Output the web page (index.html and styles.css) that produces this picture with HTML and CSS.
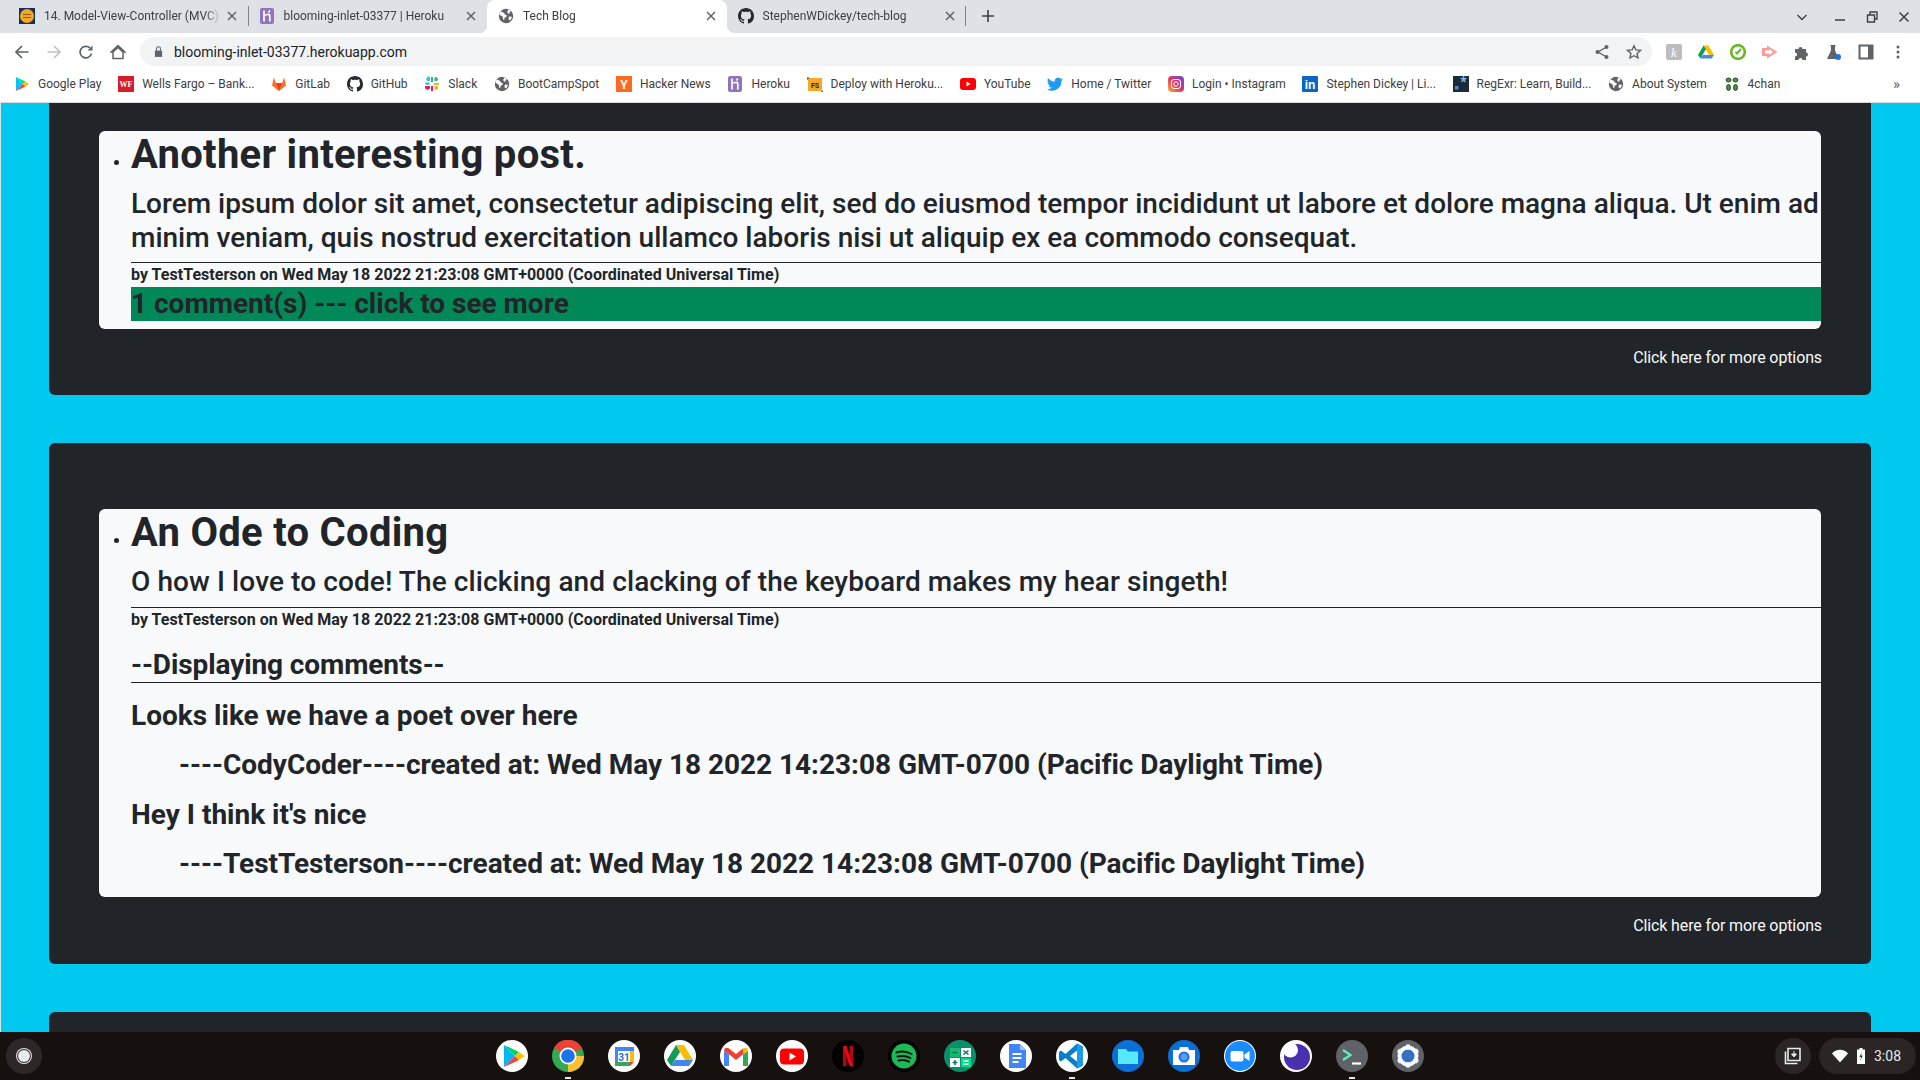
FILE: index.html
```html
<!DOCTYPE html>
<html lang="en">
<head>
    <meta charset="UTF-8">
    <title>Tech Blog</title>
    <link rel="stylesheet" href="styles.css">
</head>
<body>
    <svg class="defs" width="0" height="0">
        <symbol id="globe" viewBox="0 0 16 16">
            <circle cx="8" cy="8" r="7.2" fill="#5f6368"/>
            <path d="M3 3.4 6.2 5l.6 1.6 2 .6-.6 2-1.6.4-.4 2.6-1-.6-.6-3-3.200-1.800C1.200 5.400 2 4.200 3 3.400zM9.400 1.200c1.400.2 2.600.9 3.500 1.800l-1.300 1.200-.2 1.600-1.800-.6-.4-1.800 1-.6zM11 8.400l2.900.3c-.2 1.500-.9 2.800-2 3.800l-1.500-1.500z" fill="#fff"/>
        </symbol>
        <symbol id="github" viewBox="0 0 16 16">
            <path fill="#24292f" d="M8 0C3.580 0 0 3.580 0 8c0 3.540 2.290 6.530 5.470 7.590.4.070.55-.17.55-.38 0-.19-.01-.82-.01-1.490-2.010.37-2.530-.49-2.690-.94-.09-.23-.48-.94-.82-1.130-.28-.15-.68-.52-.01-.53.63-.01 1.080.58 1.230.82.72 1.210 1.870.87 2.330.66.07-.52.28-.87.51-1.070-1.780-.2-3.640-.89-3.640-3.950 0-.87.31-1.590.82-2.150-.08-.2-.36-1.020.08-2.120 0 0 .67-.21 2.200.82.64-.18 1.320-.27 2-.27.68 0 1.360.09 2 .27 1.530-1.040 2.200-.82 2.200-.82.44 1.100.16 1.920.08 2.120.51.56.82 1.270.82 2.150 0 3.070-1.870 3.750-3.650 3.950.29.25.54.73.54 1.480 0 1.070-.01 1.930-.01 2.200 0 .21.15.46.55.38A8.013 8.013 0 0016 8c0-4.420-3.580-8-8-8z"/>
        </symbol>
        <symbol id="heroku" viewBox="0 0 16 16">
            <rect x="1" width="14" height="16" rx="2" fill="#8f76bb"/>
            <path d="M5 2.500v11M5 7.600c1.500-1 5.800-2 5.800 0v5.900M10.800 2.500 9.500 4.500" fill="none" stroke="#fff" stroke-width="1.700"/>
        </symbol>
        <symbol id="tab-x" viewBox="0 0 10 10">
            <path d="m1 1 8 8M9 1 1 9" stroke="#5f6368" stroke-width="1.500"/>
        </symbol>
    </svg>

    <!-- Onglets -->
    <div class="tabstrip">
        <div class="tab">
            <svg class="tab-icon" viewBox="0 0 16 16"><rect width="16" height="16" fill="#12305c"/><circle cx="8" cy="8" r="7" fill="#f5a623"/><path d="M4 6.500h8M4 9.500h8" stroke="#8a5a10"/></svg>
            <span class="tab-title">14. Model-View-Controller (MVC): Tech Blog</span>
            <svg class="tab-close"><use href="#tab-x"/></svg>
        </div>
        <div class="tab tab-split">
            <svg class="tab-icon"><use href="#heroku"/></svg>
            <span class="tab-title">blooming-inlet-03377 | Heroku</span>
            <svg class="tab-close"><use href="#tab-x"/></svg>
        </div>
        <div class="tab tab-active">
            <svg class="tab-icon"><use href="#globe"/></svg>
            <span class="tab-title">Tech Blog</span>
            <svg class="tab-close"><use href="#tab-x"/></svg>
        </div>
        <div class="tab tab-last">
            <svg class="tab-icon"><use href="#github"/></svg>
            <span class="tab-title">StephenWDickey/tech-blog</span>
            <svg class="tab-close"><use href="#tab-x"/></svg>
        </div>
        <svg class="new-tab" viewBox="0 0 12 12"><path d="M6 0v12M0 6h12" stroke="#3c4043" stroke-width="1.600"/></svg>
        <div class="window-btns">
            <svg class="win-btn" viewBox="0 0 12 12"><path d="M1.500 4 6 8.500 10.500 4" fill="none" stroke="#3c4043" stroke-width="1.400"/></svg>
            <svg class="win-btn win-min" viewBox="0 0 12 12"><path d="M1 9h10" stroke="#3c4043" stroke-width="1.500"/></svg>
            <svg class="win-btn win-max" viewBox="0 0 12 12"><path d="M1.500 4h7v7h-7zM4 3.500V1h7v7H9" fill="none" stroke="#3c4043" stroke-width="1.400"/></svg>
            <svg class="win-btn win-close" viewBox="0 0 12 12"><path d="m1.500 1.500 9 9M10.500 1.500l-9 9" stroke="#3c4043" stroke-width="1.500"/></svg>
        </div>
    </div>

    <!-- Barre d'adresse -->
    <div class="toolbar">
        <svg class="tool" viewBox="0 0 16 16"><path d="M14.500 8h-12M8 2 2 8l6 6" fill="none" stroke="#5f6368" stroke-width="1.700"/></svg>
        <svg class="tool" viewBox="0 0 16 16"><path d="M1.500 8h12M8 2l6 6-6 6" fill="none" stroke="#bfc1c4" stroke-width="1.700"/></svg>
        <svg class="tool" viewBox="0 0 16 16"><path d="M13.500 9.500A5.800 5.800 0 1 1 12 4" fill="none" stroke="#5f6368" stroke-width="1.700"/><path d="M14.500 1.500v5h-5z" fill="#5f6368"/></svg>
        <svg class="tool" viewBox="0 0 16 16"><path d="M8 1.500 1 8h2v6.500h10V8h2zM3 8l5-4.500L13 8" fill="none" stroke="#5f6368" stroke-width="1.500"/></svg>
        <div class="omnibox">
            <svg class="lock" viewBox="0 0 10 12"><path d="M1 5h8v7H1z" fill="#5f6368"/><path d="M2.800 5V3a2.200 2.200 0 0 1 4.400 0v2" fill="none" stroke="#5f6368" stroke-width="1.200"/></svg>
            <span class="url">blooming-inlet-03377.herokuapp.com</span>
            <svg class="omni-icon" viewBox="0 0 16 16"><path d="M12.500 3 4 8l8.500 5" fill="none" stroke="#5f6368" stroke-width="1.400"/><circle cx="12.500" cy="3" r="2" fill="#5f6368"/><circle cx="3.500" cy="8" r="2" fill="#5f6368"/><circle cx="12.500" cy="13" r="2" fill="#5f6368"/></svg>
            <svg class="omni-icon omni-star" viewBox="0 0 16 16"><path d="m8 1.800 1.900 4.100 4.500.5-3.300 3 .9 4.500L8 11.700l-4 2.200.9-4.500-3.300-3 4.500-.5z" fill="none" stroke="#5f6368" stroke-width="1.400"/></svg>
        </div>
        <div class="ext-icons">
            <svg class="ext" viewBox="0 0 16 16"><rect width="16" height="16" rx="2" fill="#bdbdbd"/><text x="8" y="12.500" class="ext-k">k</text></svg>
            <svg class="ext" viewBox="0 0 16 16"><path d="M5.500 1.500h5L16 11h-5z" fill="#fbbc04"/><path d="M5.500 1.500 0 11l2.500 3.500L8 5z" fill="#0f9d58"/><path d="M5 11h11l-2.500 3.500h-11z" fill="#4285f4"/></svg>
            <svg class="ext" viewBox="0 0 16 16"><circle cx="8" cy="8" r="6.800" fill="none" stroke="#6ab826" stroke-width="2.600"/><path d="M11 5 7 9.500 5.500 8" fill="none" stroke="#6ab826" stroke-width="2"/></svg>
            <svg class="ext" viewBox="0 0 16 16"><path d="M0 4h5V1.500L15.500 8 5 14.500V12H0z" fill="#fd9a9a"/><path d="M3 6.500h4.500V5L11 8l-3.500 3V9.500H3z" fill="#fff"/></svg>
            <svg class="ext" viewBox="0 0 16 16"><path d="M1 5h3.500a2 2 0 1 1 4 0H12v3.500a2 2 0 1 1 0 4V16H8.500a2 2 0 1 0-4 0H1v-3.500a2 2 0 1 0 0-4z" fill="#5f6368"/></svg>
            <svg class="ext" viewBox="0 0 16 16"><path d="M4.500 1h5v1.500H9v4L13 15H1L5 6.500v-4h-.5z" fill="#5f6368"/><circle cx="12" cy="13" r="3" fill="#1a73e8"/></svg>
            <svg class="ext" viewBox="0 0 16 16"><path d="M1.500 1.500h13v13h-13z" fill="none" stroke="#5f6368" stroke-width="2"/><path d="M10 1.500h4.500v13H10z" fill="#5f6368"/></svg>
            <svg class="ext" viewBox="0 0 16 16"><circle cx="8" cy="3" r="1.500" fill="#5f6368"/><circle cx="8" cy="8" r="1.500" fill="#5f6368"/><circle cx="8" cy="13" r="1.500" fill="#5f6368"/></svg>
        </div>
    </div>

    <!-- Favoris -->
    <div class="bookmarks">
        <div class="bm">
            <svg class="bm-icon" viewBox="0 0 16 16"><path d="M2 1v14l7-7z" fill="#00c3ff"/><path d="M2 1l7 7 2.500-2.500z" fill="#00e676"/><path d="M2 15l7-7 2.500 2.500z" fill="#f44336"/><path d="m11.500 5.500 3.500 2.500-3.500 2.500L9 8z" fill="#ffc107"/></svg>
            <span>Google Play</span>
        </div>
        <div class="bm">
            <svg class="bm-icon" viewBox="0 0 16 16"><rect width="16" height="16" fill="#d71e28"/><text x="8" y="11" class="bm-wf">WF</text></svg>
            <span>Wells Fargo – Bank...</span>
        </div>
        <div class="bm">
            <svg class="bm-icon" viewBox="0 0 16 16"><path d="M8 15 1 9.500 2.800 1.500 5 7h6l2.200-5.500L15 9.500z" fill="#fc6d26"/><path d="M8 15 5 7h6z" fill="#e24329"/></svg>
            <span>GitLab</span>
        </div>
        <div class="bm"><svg class="bm-icon"><use href="#github"/></svg><span>GitHub</span></div>
        <div class="bm">
            <svg class="bm-icon" viewBox="0 0 16 16"><path d="M6 1v4H3.500a2 2 0 1 1 2.500-4z" fill="#36c5f0"/><path d="M1 6.500h4.500V9H3a2 2 0 0 1-2-2.500z" fill="#36c5f0"/><path d="M7 1h2v5H7z" fill="#2eb67d"/><path d="M10.500 1.500A2 2 0 1 1 13 5h-2.500z" fill="#2eb67d"/><path d="M10 7h5v2h-5z" fill="#ecb22e"/><path d="M10.500 10H13a2 2 0 1 1-2.500 3z" fill="#ecb22e"/><path d="M1 10h5v2a2.500 2 0 0 1-5-.5z" fill="#e01e5a"/><path d="M7 10h2v5H7z" fill="#e01e5a"/></svg>
            <span>Slack</span>
        </div>
        <div class="bm"><svg class="bm-icon"><use href="#globe"/></svg><span>BootCampSpot</span></div>
        <div class="bm">
            <svg class="bm-icon" viewBox="0 0 16 16"><rect width="16" height="16" fill="#ff6a1f"/><text x="8" y="12.500" class="bm-y">Y</text></svg>
            <span>Hacker News</span>
        </div>
        <div class="bm"><svg class="bm-icon"><use href="#heroku"/></svg><span>Heroku</span></div>
        <div class="bm">
            <svg class="bm-icon" viewBox="0 0 16 16"><rect x="1" y="2" width="14" height="13" fill="#f9a825"/><path d="M2 2H0v2M14 16h2v-2" fill="none" stroke="#333"/><text x="8" y="11.500" class="bm-fs">FS</text></svg>
            <span>Deploy with Heroku...</span>
        </div>
        <div class="bm">
            <svg class="bm-icon" viewBox="0 0 16 16"><rect y="2" width="16" height="12" rx="3" fill="#ff0000"/><path d="m6.500 5.500 4 2.500-4 2.500z" fill="#fff"/></svg>
            <span>YouTube</span>
        </div>
        <div class="bm">
            <svg class="bm-icon" viewBox="0 0 16 16"><path d="M16 3.200c-.6.3-1.200.4-1.900.5.700-.4 1.200-1 1.400-1.800-.6.400-1.300.6-2.100.8A3.300 3.300 0 0 0 7.800 5.700 9.300 9.300 0 0 1 1.100 2.300a3.300 3.300 0 0 0 1 4.400c-.5 0-1-.2-1.500-.4 0 1.600 1.100 2.900 2.600 3.200-.5.100-1 .1-1.500 0 .4 1.300 1.600 2.200 3.100 2.300A6.600 6.600 0 0 1 0 13.200 9.300 9.300 0 0 0 14.400 5c.6-.5 1.200-1.100 1.600-1.800z" fill="#1d9bf0"/></svg>
            <span>Home / Twitter</span>
        </div>
        <div class="bm">
            <svg class="bm-icon" viewBox="0 0 16 16"><defs><linearGradient id="ig" x1="0" y1="1" x2="1" y2="0"><stop offset="0" stop-color="#fdb52b"/><stop offset=".5" stop-color="#e1306c"/><stop offset="1" stop-color="#5b51d8"/></linearGradient></defs><rect width="16" height="16" rx="4" fill="url(#ig)"/><rect x="3.500" y="3.500" width="9" height="9" rx="2.500" fill="none" stroke="#fff"/><circle cx="8" cy="8" r="2.200" fill="none" stroke="#fff"/></svg>
            <span>Login • Instagram</span>
        </div>
        <div class="bm">
            <svg class="bm-icon" viewBox="0 0 16 16"><rect width="16" height="16" rx="1" fill="#0a66c2"/><text x="8" y="13" class="bm-in">in</text></svg>
            <span>Stephen Dickey | Li...</span>
        </div>
        <div class="bm">
            <svg class="bm-icon" viewBox="0 0 16 16"><rect width="16" height="16" fill="#1c2b3a"/><rect x="2" y="10" width="3.500" height="3.500" fill="#4a90c2"/><text x="10.500" y="11" class="bm-star">*</text></svg>
            <span>RegExr: Learn, Build...</span>
        </div>
        <div class="bm"><svg class="bm-icon"><use href="#globe"/></svg><span>About System</span></div>
        <div class="bm">
            <svg class="bm-icon" viewBox="0 0 16 16"><g fill="#3f9b35" stroke="#222" stroke-width=".8"><ellipse cx="4.500" cy="4" rx="2.500" ry="2"/><ellipse cx="11.500" cy="4" rx="2.500" ry="2"/><ellipse cx="4.500" cy="11.500" rx="2" ry="3"/><ellipse cx="11.500" cy="11.500" rx="2" ry="3"/></g></svg>
            <span>4chan</span>
        </div>
        <span class="bm-more">&raquo;</span>
    </div>

    <!-- Page -->
    <div class="page">
        <div class="panel">
            <ul class="post-card">
                <li>
                    <h1>Another interesting post.</h1>
                    <h3>Lorem ipsum dolor sit amet, consectetur adipiscing elit, sed do eiusmod tempor incididunt ut labore et dolore magna aliqua. Ut enim ad minim veniam, quis nostrud exercitation ullamco laboris nisi ut aliquip ex ea commodo consequat.</h3>
                    <hr>
                    <div class="byline">by TestTesterson on Wed May 18 2022 21:23:08 GMT+0000 (Coordinated Universal Time)</div>
                    <h3 class="comment-toggle">1 comment(s) --- click to see more</h3>
                </li>
            </ul>
            <div class="options">Click here for more options</div>
        </div>

        <div class="panel">
            <ul class="post-card">
                <li>
                    <h1>An Ode to Coding</h1>
                    <h3 class="post-short">O how I love to code! The clicking and clacking of the keyboard makes my hear singeth!</h3>
                    <hr>
                    <div class="byline">by TestTesterson on Wed May 18 2022 21:23:08 GMT+0000 (Coordinated Universal Time)</div>
                    <div class="comments">
                        <h3 class="comments-head">--Displaying comments--</h3>
                        <hr>
                        <h3 class="comment-text">Looks like we have a poet over here</h3>
                        <h3 class="comment-meta">----CodyCoder----created at: Wed May 18 2022 14:23:08 GMT-0700 (Pacific Daylight Time)</h3>
                        <h3 class="comment-text">Hey I think it's nice</h3>
                        <h3 class="comment-meta">----TestTesterson----created at: Wed May 18 2022 14:23:08 GMT-0700 (Pacific Daylight Time)</h3>
                    </div>
                </li>
            </ul>
            <div class="options">Click here for more options</div>
        </div>

        <div class="panel"></div>
    </div>

    <!-- Shelf -->
    <div class="shelf">
        <div class="shelf-left">
            <div class="launcher"><span class="launcher-dot"></span></div>
        </div>
        <div class="apps">
            <div class="app"><svg viewBox="0 0 32 32"><circle cx="16" cy="16" r="16" fill="#fff"/><path d="M8 5v22l11-11z" fill="#00b8f1"/><path d="m8 5 11 11 4-4z" fill="#00d26a"/><path d="m8 27 11-11 4 4z" fill="#f0414c"/><path d="m23 12 6 4-6 4-4-4z" fill="#ffc400"/></svg></div>
            <div class="app app-open"><svg viewBox="0 0 32 32"><circle cx="16" cy="16" r="16" fill="#34a853"/><path d="M16 16 2 8a16 16 0 0 1 28 0z" fill="#ea4335"/><path d="M16 16h16a16 16 0 0 1-8 14 16 16 0 0 1-8 2z" fill="#fbc02d"/><circle cx="16" cy="16" r="8.500" fill="#fff"/><circle cx="16" cy="16" r="6.800" fill="#1a73e8"/></svg></div>
            <div class="app"><svg viewBox="0 0 32 32"><circle cx="16" cy="16" r="16" fill="#fff"/><rect x="7" y="7" width="19" height="4" fill="#4285f4"/><rect x="7" y="7" width="3" height="18" fill="#4285f4"/><rect x="22" y="11" width="4" height="11" fill="#fbbc04"/><path d="M7 22h15v4H7z" fill="#34a853"/><path d="M22 22h4l-4 4z" fill="#ea4335"/><text x="16" y="21" class="app-cal">31</text></svg></div>
            <div class="app"><svg viewBox="0 0 32 32"><circle cx="16" cy="16" r="16" fill="#fff"/><path d="M12 5h8l9 15h-8z" fill="#fbbc04"/><path d="M12 5 3 20l4 6 9-14z" fill="#0f9d58"/><path d="M11 20h18l-4 6H7z" fill="#4285f4"/></svg></div>
            <div class="app"><svg viewBox="0 0 32 32"><circle cx="16" cy="16" r="16" fill="#fff"/><path d="M4 11v15h5V14z" fill="#4285f4"/><path d="M28 11v15h-5V14z" fill="#34a853"/><path d="M4 11c0-3 3-4 5-2.500l7 5.500 7-5.500 1 5-8 6.500-8-6.500z" fill="#ea4335"/><path d="M23 8.500c2-1.500 5-.5 5 2.500l-4.500 3.500z" fill="#fbbc04"/></svg></div>
            <div class="app"><svg viewBox="0 0 32 32"><circle cx="16" cy="16" r="16" fill="#fff"/><rect x="4" y="8.500" width="24" height="16" rx="4" fill="#f00"/><path d="m13.500 12.500 6.500 4-6.500 4z" fill="#fff"/></svg></div>
            <div class="app"><svg viewBox="0 0 32 32"><circle cx="16" cy="16" r="16" fill="#000"/><path d="M11 6h3.500v20L11 26.500zM17.500 6H21v20.500L17.500 26z" fill="#b20710"/><path d="M11 6h3.500L21 26.500 17.500 26z" fill="#e50914"/></svg></div>
            <div class="app"><svg viewBox="0 0 32 32"><circle cx="16" cy="16" r="16" fill="#000"/><circle cx="16" cy="16" r="12.500" fill="#1db954"/><path d="M8.500 12.500c5-1.500 10.500-1 15 1.500M9.500 16.500c4.500-1 9-.7 12.800 1.500M10.500 20.500c3.800-.8 7.500-.5 10.500 1.200" fill="none" stroke="#111" stroke-width="2" stroke-linecap="round"/></svg></div>
            <div class="app"><svg viewBox="0 0 32 32"><circle cx="16" cy="16" r="16" fill="#0b8f6a"/><rect x="6" y="8" width="10" height="9" fill="#17b86f"/><rect x="17" y="8" width="10" height="9" fill="#fff"/><rect x="6" y="18" width="10" height="9" fill="#fff"/><rect x="17" y="18" width="10" height="9" fill="#00e08a"/><path d="M8.500 12.500h5M19.500 10.500l5 4M24.500 10.500l-5 4M11 20v5M8.500 22.500h5" stroke="#0b7a55" stroke-width="1.600"/><path d="M19.500 21h5M19.500 24h5" stroke="#fff" stroke-width="1.600"/></svg></div>
            <div class="app"><svg viewBox="0 0 32 32"><circle cx="16" cy="16" r="16" fill="#fff"/><path d="M9 4h11l6 6v18H9z" fill="#4285f4"/><path d="M20 4l6 6h-6z" fill="#a1c2fa"/><path d="M12.500 14h9M12.500 18h9M12.500 22h6" stroke="#fff" stroke-width="1.800"/></svg></div>
            <div class="app app-open"><svg viewBox="0 0 32 32"><circle cx="16" cy="16" r="16" fill="#fff"/><path d="M21 3.500 27 6.500v19L21 28.500 9.500 18 5 21.500 3 20v-8l2-1.500L9.500 14z" fill="#0a7fc9"/><path d="M21 3.500 27 6.500v19L21 28.500z" fill="#1a9be6"/><path d="M21 10.500v11L14 16z" fill="#fff"/></svg></div>
            <div class="app"><svg viewBox="0 0 32 32"><circle cx="16" cy="16" r="16" fill="#0b6fd8"/><path d="M6 9h8l2 2.500h10V24H6z" fill="#56e8fb"/></svg></div>
            <div class="app"><svg viewBox="0 0 32 32"><circle cx="16" cy="16" r="16" fill="#0b6fd8"/><path d="M5 10h6l1-3h8l1 3h6v15H5z" fill="#fff"/><circle cx="16" cy="17" r="5.500" fill="#1a73e8"/><circle cx="16" cy="17" r="3.500" fill="#5a9cf0"/></svg></div>
            <div class="app"><svg viewBox="0 0 32 32"><circle cx="16" cy="16" r="16" fill="#fff"/><circle cx="16" cy="16" r="15" fill="#1a8cff"/><rect x="6.500" y="11" width="13" height="10.500" rx="2" fill="#fff"/><path d="m20.500 14.500 5-3.500v10l-5-3.500z" fill="#fff"/></svg></div>
            <div class="app"><svg viewBox="0 0 32 32"><circle cx="16" cy="16" r="16" fill="#fff"/><circle cx="17" cy="17" r="13" fill="#4a2fae"/><circle cx="10.500" cy="10" r="7.500" fill="#fff"/></svg></div>
            <div class="app app-open"><svg viewBox="0 0 32 32"><circle cx="16" cy="16" r="16" fill="#5f6368"/><path d="m7 10 7.500 5L7 20" fill="none" stroke="#5ff0c0" stroke-width="2.200"/><path d="M16 23.500h9" stroke="#fff" stroke-width="2.200"/></svg></div>
            <div class="app"><svg viewBox="0 0 32 32"><circle cx="16" cy="16" r="16" fill="#5f6368"/><circle cx="16" cy="16" r="8.500" fill="none" stroke="#fff" stroke-width="4"/><path d="M16 4.500v5M16 22.500v5M6 10.200l4 2.400M22 19.400l4 2.400M6 21.800l4-2.400M22 12.600l4-2.400" stroke="#fff" stroke-width="4"/><circle cx="16" cy="16" r="6" fill="#1a73e8"/><circle cx="16" cy="16" r="3.500" fill="#4a6fa5"/></svg></div>
        </div>
        <div class="shelf-right">
            <div class="holding">
                <svg viewBox="0 0 20 20"><path d="M5 2.500h12v12H5z" fill="none" stroke="#e8eaed" stroke-width="1.600"/><path d="M2.500 5.500v12h12" fill="none" stroke="#e8eaed" stroke-width="1.600"/><path d="M11 5v5M8.500 8 11 11l2.500-3z" fill="#e8eaed" stroke="#e8eaed"/></svg>
            </div>
            <div class="status">
                <svg class="wifi" viewBox="0 0 16 14"><path d="M8 13.500 0 4.500C4-.5 12-.5 16 4.500z" fill="#fff"/></svg>
                <svg class="battery" viewBox="0 0 8 16"><path d="M2.500 0h3v1.500H8V16H0V1.500h2.500z" fill="#fff"/><path d="M4.800 4 2.500 9h1.600l-.9 4 2.500-5.500H4z" fill="#2b2625"/></svg>
                <span class="clock">3:08</span>
            </div>
        </div>
    </div>
</body>
</html>
```

FILE: styles.css
```css
* {
    box-sizing: border-box;
}

body {
    margin: 0;
    height: 1080px;
    overflow: hidden;
    display: flex;
    flex-direction: column;
    font-family: Roboto, "Liberation Sans", sans-serif;
    color: #212529;
    background-color: #00c9f0;
}

.defs {
    display: none;
}

/* Onglets */
.tabstrip {
    height: 33px;
    flex: none;
    display: flex;
    align-items: stretch;
    padding-left: 8px;
    background-color: #dee1e6;
    font-size: 12px;
    color: #3c4043;
}

.tab {
    position: relative;
    width: 239.5px;
    display: flex;
    align-items: center;
    padding: 0 11px 1px 11px;
}

.tab-split::before, .tab-last::after {
    content: "";
    position: absolute;
    top: 6px;
    height: 20px;
    width: 1px;
    background-color: #80868b;
}

.tab-split::before {
    left: 0;
}

.tab-last::after {
    right: 0;
}

.tab-active {
    background-color: #fff;
    border-radius: 8px 8px 0 0;
}

.tab-active::before, .tab-active::after {
    content: "";
    position: absolute;
    bottom: 0;
    width: 8px;
    height: 8px;
}

.tab-active::before {
    left: -8px;
    background: radial-gradient(circle at 0 0, #dee1e6 8px, #fff 8.500px);
}

.tab-active::after {
    right: -8px;
    background: radial-gradient(circle at 100% 0, #dee1e6 8px, #fff 8.500px);
}

.tab-icon {
    width: 16px;
    height: 16px;
    flex: none;
    margin-right: 9px;
}

.tab-title {
    flex: 1;
    overflow: hidden;
    white-space: nowrap;
    -webkit-mask-image: linear-gradient(to left, transparent 0, #000 16px);
    mask-image: linear-gradient(to left, transparent 0, #000 16px);
}

.tab-close {
    flex: none;
    width: 10px;
    height: 10px;
    margin-left: 6px;
}

.new-tab {
    width: 12px;
    height: 12px;
    margin: 10px 0 0 16px;
}

.window-btns {
    display: flex;
    align-items: center;
    margin-left: auto;
    padding-right: 10px;
}

.win-btn {
    width: 12px;
    height: 12px;
}

.win-min {
    margin-left: 26px;
}

.win-max {
    margin-left: 20px;
}

.win-close {
    margin-left: 20px;
}

/* Barre d'adresse */
.toolbar {
    height: 33px;
    flex: none;
    display: flex;
    align-items: center;
    padding: 4px 0 0 14px;
    background-color: #fff;
}

.tool {
    width: 16px;
    height: 16px;
    flex: none;
    margin-right: 16px;
}

.omnibox {
    width: 1512px;
    height: 29px;
    margin-left: -2px;
    display: flex;
    align-items: center;
    padding: 0 10px 0 14px;
    border-radius: 15px;
    background-color: #f1f3f4;
    font-size: 14px;
}

.lock {
    width: 9px;
    height: 11px;
    margin-right: 11px;
}

.url {
    flex: 1;
    color: #202124;
}

.omni-icon {
    width: 16px;
    height: 16px;
}

.omni-star {
    margin-left: 16px;
}

.ext-icons {
    display: flex;
    gap: 16px;
    margin-left: 14px;
}

.ext {
    width: 16px;
    height: 16px;
}

.ext-k {
    font-family: "Liberation Serif", serif;
    font-size: 13px;
    font-style: italic;
    fill: #fff;
    text-anchor: middle;
}

/* Favoris */
.bookmarks {
    height: 37px;
    flex: none;
    display: flex;
    align-items: center;
    gap: 16.7px;
    padding: 0 0 1px 14px;
    background-color: #fff;
    border-bottom: 1px solid #dadce0;
    font-size: 12px;
    color: #3c4043;
    white-space: nowrap;
}

.bm {
    display: flex;
    align-items: center;
    gap: 8px;
}

.bm-icon {
    width: 16px;
    height: 16px;
    flex: none;
}

.bm-wf, .bm-y, .bm-fs, .bm-in, .bm-star {
    text-anchor: middle;
    font-weight: 700;
    fill: #fff;
}

.bm-wf {
    font-family: "Liberation Serif", serif;
    font-size: 8px;
}

.bm-y {
    font-size: 12px;
}

.bm-fs {
    font-size: 7px;
    fill: #222;
}

.bm-in {
    font-family: "Liberation Sans", sans-serif;
    font-size: 12px;
}

.bm-star {
    font-size: 14px;
    fill: #7fc4ef;
}

.bm-more {
    margin-left: auto;
    padding-right: 20px;
    font-size: 15px;
    color: #5f6368;
}

/* Page */
.page {
    flex: 1;
    min-height: 0;
    overflow: hidden;
    display: flex;
    flex-direction: column;
    gap: 48px;
    padding: 0 49px 0 48px;
    border-left: 1px solid #d8e6ea;
}

.panel {
    flex: none;
    padding: 66px 50px 25.600px;
    border-radius: 6px;
    background-color: #212529;
}

.panel:first-child {
    margin-top: -38px;
}

.panel:last-child {
    height: 120px;
}

.post-card {
    margin: 0;
    padding: 0 0 8px 32px;
    border-radius: 6px;
    background-color: #f8f9fa;
    font-size: 16px;
}

h1 {
    margin: 0 0 8px;
    font-size: 40px;
    line-height: 1.2;
    font-weight: 700;
    letter-spacing: .28px;
}

h3 {
    margin: 0 0 8px;
    font-size: 28px;
    line-height: 1.2;
    font-weight: 500;
}

.post-short {
    letter-spacing: .1px;
}

hr {
    margin: 0;
    border: none;
    border-top: 1px solid #212529;
}

.byline {
    font-weight: 700;
    line-height: 24px;
    letter-spacing: .03px;
}

.comment-toggle {
    margin-bottom: 0;
    font-weight: 700;
    background-color: #008858;
}

.comments {
    padding-top: 16px;
}

.comments-head {
    margin-bottom: 0;
    font-weight: 700;
    letter-spacing: -.1px;
}

.comments hr {
    margin-bottom: 16px;
}

.comment-text, .comment-meta {
    margin-bottom: 16px;
    font-weight: 700;
}

.comment-meta {
    padding-left: 48px;
    letter-spacing: -.03px;
}

.comment-meta:last-child {
    margin-bottom: 8px;
}

.options {
    margin: 17px -1px 0 0;
    text-align: right;
    line-height: 24px;
    letter-spacing: -.12px;
    color: #f8f9fa;
}

/* Shelf */
.shelf {
    height: 48px;
    flex: none;
    display: grid;
    grid-template-columns: 1fr auto 1fr;
    align-items: center;
    background-color: #16100f;
}

.shelf-left {
    padding-left: 6px;
}

.launcher {
    width: 36px;
    height: 36px;
    display: flex;
    align-items: center;
    justify-content: center;
    border-radius: 50%;
    background-color: #2d2827;
}

.launcher-dot {
    width: 12px;
    height: 12px;
    border-radius: 50%;
    background-color: #e8eaed;
    box-shadow: 0 0 0 1px #2d2827, 0 0 0 2px #e8eaed;
}

.apps {
    display: flex;
    gap: 24px;
}

.app {
    position: relative;
    width: 32px;
    height: 32px;
}

.app svg {
    display: block;
    width: 32px;
    height: 32px;
}

.app-open::after {
    content: "";
    position: absolute;
    left: 13px;
    bottom: -7px;
    width: 6px;
    height: 2px;
    background-color: #e8eaed;
}

.app-cal {
    font-size: 10px;
    font-weight: 700;
    fill: #1a73e8;
    text-anchor: middle;
}

.shelf-right {
    display: flex;
    justify-content: flex-end;
    align-items: center;
    gap: 8px;
    padding-right: 4px;
}

.holding {
    width: 36px;
    height: 36px;
    display: flex;
    align-items: center;
    justify-content: center;
    border-radius: 50%;
    background-color: #2b2625;
}

.holding svg {
    width: 20px;
    height: 20px;
}

.status {
    width: 97px;
    height: 36px;
    display: flex;
    align-items: center;
    padding-left: 13px;
    border-radius: 18px;
    background-color: #2b2625;
    color: #e8eaed;
    font-size: 14px;
}

.wifi {
    width: 16px;
    height: 14px;
    margin-right: 9px;
}

.battery {
    width: 8px;
    height: 16px;
    margin-right: 9px;
}
```
